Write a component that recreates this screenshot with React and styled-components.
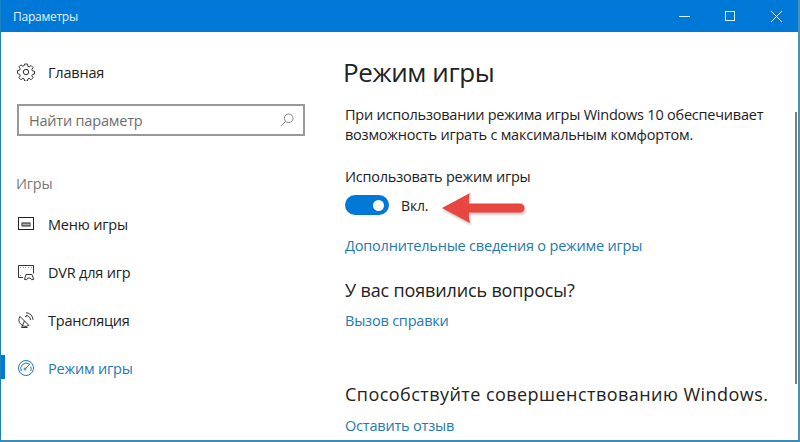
import React from 'react'
import styled, { createGlobalStyle } from 'styled-components'

const Global = createGlobalStyle`
	html, body { margin: 0; padding: 0; background: #fff; overflow: hidden; }
	body { font-family: "Open Sans", "Noto Sans", sans-serif; }
`

const Window = styled.div`
	width: 800px;
	height: 442px;
	box-sizing: border-box;
	display: flex;
	flex-direction: column;
	border-left: 1px solid #1b82c0;
	border-right: 2px solid #4a90b4;
	border-bottom: 2px solid #3f8bb0;
	overflow: hidden;
	position: relative;
`

const TitleBar = styled.div`
	height: 32px;
	flex: none;
	margin: 0 -1px;
	background: #0078d7;
	display: flex;
	align-items: center;
	padding-left: 13px;
	box-sizing: border-box;
	color: #e4f1fb;
	font-size: 12px;
	letter-spacing: -0.25px;
`

const TitleText = styled.span`
	flex: 1;
`

const WinButton = styled.div`
	width: 46px;
	height: 32px;
	display: flex;
	align-items: center;
	justify-content: center;
	color: #d8f6ff;
`

const Body = styled.div`
	flex: 1;
	display: flex;
	min-height: 0;
`

const Sidebar = styled.nav`
	width: 344px;
	flex: none;
	padding-top: 16px;
`

const NavRow = styled.div`
	height: 48px;
	display: flex;
	align-items: center;
	padding-left: 16px;
	position: relative;
	font-size: 14.5px;
	letter-spacing: -0.2px;
	color: ${p => p.$active ? '#2279b3' : '#1c1c1c'};
	${p => p.$active && `
		&::before {
			content: '';
			position: absolute;
			left: -1px;
			top: 11px;
			width: 5px;
			height: 24px;
			background: #0078d7;
		}
	`}
`

const NavIcon = styled.span`
	width: 18px;
	height: 18px;
	margin-right: 13px;
	display: flex;
	align-items: center;
	justify-content: center;
`

const SearchBox = styled.div`
	margin: 8px 0 0 16px;
	width: 288px;
	height: 32px;
	box-sizing: border-box;
	border: 2px solid #999;
	display: flex;
	align-items: center;
	justify-content: space-between;
	padding: 0 9px 0 10px;
	color: #6d6d6d;
	font-size: 14.5px;
	letter-spacing: -0.2px;
`

const GroupLabel = styled.div`
	margin: 36px 0 4px 15px;
	height: 24px;
	line-height: 24px;
	color: #777;
	font-size: 14.5px;
	letter-spacing: -0.2px;
`

const Content = styled.main`
	flex: 1;
	padding-top: 20px;
	color: #1c1c1c;
`

const PageTitle = styled.h1`
	margin: 0 0 0 -2px;
	font-weight: 400;
	font-size: 26px;
	line-height: 40px;
	letter-spacing: -0.4px;
	color: #222;
`

const Paragraph = styled.p`
	margin: 13px 0 0;
	width: 430px;
	font-size: 14.5px;
	line-height: 20px;
	letter-spacing: -0.22px;
`

const SettingLabel = styled.div`
	margin-top: 22px;
	font-size: 14.5px;
	line-height: 20px;
	letter-spacing: -0.22px;
`

const ToggleRow = styled.div`
	margin-top: 8px;
	height: 20px;
	display: flex;
	align-items: center;
	gap: 12px;
	font-size: 14px;
	letter-spacing: -0.15px;
`

const Toggle = styled.div`
	width: 44px;
	height: 20px;
	border-radius: 10px;
	background: #0078d7;
	display: flex;
	align-items: center;
	justify-content: flex-end;
	padding-right: 5px;
	box-sizing: border-box;
`

const Knob = styled.div`
	width: 11px;
	height: 11px;
	border-radius: 50%;
	background: #fff;
`

const Link = styled.div`
	margin-top: ${p => p.$top}px;
	color: #2279b3;
	font-size: 14.5px;
	line-height: 20px;
	letter-spacing: -0.2px;
`

const Heading = styled.h2`
	margin: ${p => p.$top}px 0 0;
	font-weight: 400;
	font-size: 18px;
	line-height: 26px;
	letter-spacing: ${p => p.$spacing}px;
	color: #222;
`

const Arrow = styled.svg`
	position: absolute;
	left: 440px;
	top: 193px;
	filter: drop-shadow(1px 2px 1px rgba(90, 60, 60, 0.35));
`

const ScrollThumb = styled.div`
	position: absolute;
	right: 1px;
	top: 112px;
	width: 2px;
	height: 272px;
	background: #7d8278;
`

const Gear = () => (
	<svg width="18" height="18" viewBox="0 0 18 18" fill="none" stroke="#333" strokeWidth="1">
		<circle cx="9" cy="9" r="2.7" />
		<path d="M7.6 1h2.8l.4 2.2 1.4.6 1.9-1.3 2 2-1.3 1.9.6 1.4 2.1.4v2.8l-2.1.4-.6 1.4 1.3 1.9-2 2-1.9-1.3-1.4.6-.4 2.1H7.6l-.4-2.1-1.4-.6-1.9 1.3-2-2 1.3-1.9-.6-1.4L.5 10.4V7.6l2.1-.4.6-1.4-1.3-1.9 2-2 1.9 1.3 1.4-.6z" />
	</svg>
)

const MenuIcon = () => (
	<svg width="18" height="16" viewBox="0 0 18 16" fill="none" stroke="#222">
		<rect x="1.500" y="1.500" width="15" height="12" />
		<rect x="5" y="7" width="8" height="3" strokeWidth="1" />
		<path d="M7 7v3M9 7v3M11 7v3" strokeWidth="0.7" />
	</svg>
)

const DvrIcon = () => (
	<svg width="18" height="18" viewBox="0 0 18 18" fill="none" stroke="#333">
		<path d="M6 14.500H1.500v-12h15v8" />
		<path d="M3.500 4.500h.5M6 4.500h.5M8.500 4.500h.5M11 4.500h.5M14 4.500h.5M3.500 12.500h.5" strokeWidth="1.2" />
		<path d="M7.500 16.500l1.500-5h6l1.700 5-2.200.2-1.300-1.700h-2.400l-1.200 1.700z" />
	</svg>
)

const CastIcon = () => (
	<svg width="18" height="18" viewBox="0 0 18 18" fill="none" stroke="#333">
		<path d="M3 5.500a6.400 6.400 0 0 0 8.800 8.800z" />
		<path d="M7.500 10l-3 6.500h6" />
		<path d="M8 6l2.200-1.500M9 1.800a7 7 0 0 1 7 7M9 4.500a4.500 4.500 0 0 1 4.500 4.500" />
	</svg>
)

const GaugeIcon = () => (
	<svg width="18" height="18" viewBox="0 0 18 18" fill="none" stroke="#2279b3">
		<circle cx="9" cy="9" r="7.500" />
		<path d="M4.300 12a5.500 5.500 0 0 1 8-7" />
		<path d="M13.700 7.500a5.500 5.500 0 0 1 0 4.500" />
		<path d="M8.200 9.800L13 5" />
		<circle cx="8" cy="10" r="1" />
	</svg>
)

const SearchIcon = () => (
	<svg width="14" height="14" viewBox="0 0 14 14" fill="none" stroke="#888">
		<circle cx="8.700" cy="5.300" r="4.300" />
		<path d="M5.500 8.500L.8 13.200" />
	</svg>
)

const App = () => (
	<Window>
		<Global />
		<TitleBar>
			<TitleText>Параметры</TitleText>
			<WinButton>
				<svg width="11" height="10" viewBox="0 0 11 10" stroke="currentColor"><path d="M0 5.500h11" /></svg>
			</WinButton>
			<WinButton>
				<svg width="10" height="10" viewBox="0 0 10 10" fill="none" stroke="currentColor"><rect x="0.500" y="0.500" width="9" height="9" /></svg>
			</WinButton>
			<WinButton>
				<svg width="11" height="11" viewBox="0 0 11 11" stroke="currentColor"><path d="M0 0l11 11M11 0L0 11" /></svg>
			</WinButton>
		</TitleBar>
		<Body>
			<Sidebar>
				<NavRow>
					<NavIcon><Gear /></NavIcon>
					Главная
				</NavRow>
				<SearchBox>
					Найти параметр
					<SearchIcon />
				</SearchBox>
				<GroupLabel>Игры</GroupLabel>
				<NavRow><NavIcon><MenuIcon /></NavIcon>Меню игры</NavRow>
				<NavRow><NavIcon><DvrIcon /></NavIcon>DVR для игр</NavRow>
				<NavRow><NavIcon><CastIcon /></NavIcon>Трансляция</NavRow>
				<NavRow $active><NavIcon><GaugeIcon /></NavIcon>Режим игры</NavRow>
			</Sidebar>
			<Content>
				<PageTitle>Режим игры</PageTitle>
				<Paragraph>При использовании режима игры Windows 10 обеспечивает возможность играть с максимальным комфортом.</Paragraph>
				<SettingLabel>Использовать режим игры</SettingLabel>
				<ToggleRow>
					<Toggle><Knob /></Toggle>
					Вкл.
				</ToggleRow>
				<Link $top={21}>Дополнительные сведения о режиме игры</Link>
				<Heading $top={21} $spacing={-0.15}>У вас появились вопросы?</Heading>
				<Link $top={8}>Вызов справки</Link>
				<Heading $top={50} $spacing={0.45}>Способствуйте совершенствованию Windows.</Heading>
				<Link $top={9}>Оставить отзыв</Link>
			</Content>
		</Body>
		<ScrollThumb />
		<Arrow width="90" height="34" viewBox="0 0 90 34">
			<path d="M1 15L29 0c-1 3-1.500 7-1 10.500h51a4.500 4.500 0 0 1 0 9H28c-.5 3.500 0 7 1 10.500z" fill="#e8473f" />
		</Arrow>
	</Window>
)

export default App
